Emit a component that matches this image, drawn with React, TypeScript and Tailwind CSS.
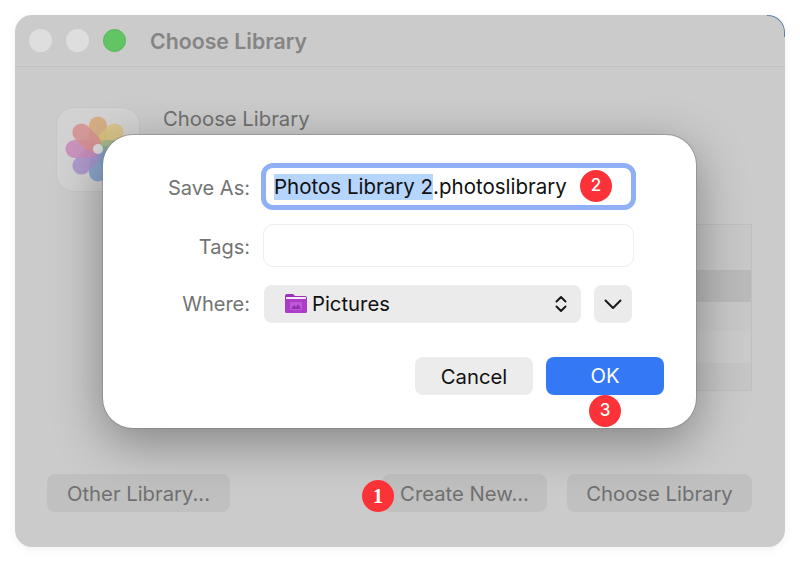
const petals = [
  { a: 0, c: "#d6a878" },
  { a: 45, c: "#d9c27e" },
  { a: 90, c: "#9cb98a" },
  { a: 135, c: "#84a9a4" },
  { a: 180, c: "#7f9ec9" },
  { a: 225, c: "#a891cc" },
  { a: 270, c: "#c98ab9" },
  { a: 315, c: "#d68f8f" },
];

function Badge({ n, className, serif }: { n: string; className: string; serif?: boolean }) {
  return (
    <div
      className={`absolute flex h-8 w-8 items-center justify-center rounded-full bg-[#fb3338] text-white ${
        serif ? "font-['Liberation_Serif',serif] text-[20px] font-bold" : "text-[17px] font-medium"
      } ${className}`}
    >
      {n}
    </div>
  );
}

function FooterButton({ label, className }: { label: string; className: string }) {
  return (
    <div className={`flex h-[38px] items-center justify-center rounded-lg bg-black/5 pt-[2px] text-[20.3px] text-[#707070] ${className}`}>
      {label}
    </div>
  );
}

function FieldLabel({ text, className }: { text: string; className: string }) {
  return <span className={`w-[147px] text-right text-[20px] text-[#737373] ${className}`}>{text}</span>;
}

export default function App() {
  return (
    <div className="relative h-[563px] w-[800px] overflow-hidden bg-white p-[15px] font-['Inter',sans-serif]">
      <div className="relative flex h-[532px] w-[770px] flex-col overflow-hidden rounded-[17px] bg-[#cbcbcb] shadow-[0_2px_10px_rgba(0,0,0,0.06)]">
        <div className="absolute right-0 top-0 h-[22px] w-[18px] rounded-tr-[17px] border-r border-t border-[#5f80ab]" />
        <div className="flex h-[52px] shrink-0 items-center border-b border-[#c0c0c0] pl-[14px]">
          <span className="h-[23px] w-[23px] rounded-full bg-[#dedede]" />
          <span className="ml-[14px] h-[23px] w-[23px] rounded-full bg-[#dedede]" />
          <span className="ml-[14px] h-[23px] w-[23px] rounded-full border border-[#52b955] bg-[#63c466]" />
          <span className="ml-[24px] pt-[2px] text-[21.3px] font-semibold text-[#858585]">Choose Library</span>
        </div>
        <div className="flex pl-[41px] pt-[40px]">
          <div className="flex h-[85px] w-[84px] items-center justify-center rounded-[18px] border border-[#c6c6c6] bg-[#d2d2d2]">
            <svg width="84" height="85" viewBox="-42 -42 84 85" className="shrink-0">
              {petals.map((p) => (
                <rect key={p.a} x="-9" y="-32.5" width="18" height="33" rx="9" fill={p.c} fillOpacity="0.85" transform={`rotate(${p.a})`} />
              ))}
              <circle r="5" fill="#dcdcdc" />
            </svg>
          </div>
          <div className="ml-[23px] text-[20.3px] leading-[24px] text-[#707070]">Choose Library</div>
        </div>
        <div className="ml-auto mr-[33px] mt-[32px] flex w-[130px] flex-col border border-[#bfbfbf]">
          <div className="h-[45px] bg-[#c8c8c8]" />
          <div className="h-[32px] bg-[#bababa]" />
          <div className="h-[29px] bg-[#c8c8c8]" />
          <div className="h-[32px] bg-[#cbcbcb]" />
          <div className="h-[27px] bg-[#c6c6c6]" />
        </div>
        <div className="mt-auto flex items-center pb-[35px] pl-[32px] pr-[33px]">
          <FooterButton label="Other Library..." className="w-[183px]" />
          <FooterButton label="Create New..." className="ml-auto w-[165px]" />
          <FooterButton label="Choose Library" className="ml-[20px] w-[185px]" />
        </div>
      </div>

      <div className="absolute left-[103px] top-[135px] flex h-[293px] w-[593px] flex-col rounded-[30px] bg-white shadow-[0_0_0_1px_rgba(130,130,130,0.55),0_14px_50px_rgba(0,0,0,0.36)]">
        <div className="mt-[28px] flex h-[47px] items-center">
          <FieldLabel text="Save As:" className="pt-[2px]" />
          <div className="ml-[11px] flex h-[47px] w-[375px] items-center rounded-[12px] border-[5px] border-[#8fb0f4] pl-[8px] pt-[1px] text-[20.5px] leading-[26px] text-[#111]">
            <span className="bg-[#b5d5fd]">Photos Library 2</span>
            <span>.photoslibrary</span>
          </div>
        </div>
        <div className="mt-[14px] flex h-[43px] items-center">
          <FieldLabel text="Tags:" className="pt-[2px]" />
          <div className="ml-[13px] h-[43px] w-[371px] rounded-[10px] border border-[#eeeeee]" />
        </div>
        <div className="mt-[18px] flex h-[38px] items-center">
          <FieldLabel text="Where:" className="" />
          <div className="ml-[14px] flex h-[38px] w-[317px] items-center rounded-lg bg-[#ebebeb] pl-[20px] pr-[14px] text-[20.3px] text-[#111]">
            <svg width="24" height="20" viewBox="0 0 24 20" className="shrink-0">
              <path d="M1 2 a2 2 0 0 1 2-2 h6 l2 2 h10 a2 2 0 0 1 2 2 v13 a2 2 0 0 1-2 2 H3 a2 2 0 0 1-2-2z" fill="#9a2fb8" />
              <rect x="2" y="3" width="20" height="2" fill="#f6ecf9" />
              <rect x="1" y="5" width="22" height="14" rx="2" fill="#ad3ccb" />
              <rect x="6" y="8" width="12" height="8" rx="1" fill="#bd5ad6" />
              <path d="M7 15 l3-4 2 2 2-3 3 5z" fill="#9230ad" />
            </svg>
            <span className="ml-[4px] pt-[1px]">Pictures</span>
            <svg width="12" height="18" viewBox="0 0 12 18" className="ml-auto" fill="none" stroke="#1a1a1a" strokeWidth="2" strokeLinecap="round" strokeLinejoin="round">
              <path d="M1.5 6.5 L6 2 L10.5 6.5" />
              <path d="M1.5 11.5 L6 16 L10.5 11.5" />
            </svg>
          </div>
          <div className="ml-[13px] flex h-[38px] w-[38px] items-center justify-center rounded-lg bg-[#ebebeb]">
            <svg width="18" height="11" viewBox="0 0 18 11" fill="none" stroke="#1a1a1a" strokeWidth="2" strokeLinecap="round" strokeLinejoin="round">
              <path d="M1.5 1.5 L9 9 L16.5 1.5" />
            </svg>
          </div>
        </div>
        <div className="mt-[34px] flex pl-[312px]">
          <div className="flex h-[38px] w-[118px] items-center justify-center rounded-lg bg-[#ececec] pt-[2px] text-[20.3px] text-[#111]">Cancel</div>
          <div className="ml-[13px] flex h-[38px] w-[118px] items-center justify-center rounded-lg bg-[#3478f6] pt-[1px] text-[20.3px] text-white">OK</div>
        </div>
      </div>

      <Badge n="1" serif className="left-[362px] top-[480px]" />
      <Badge n="2" className="left-[580px] top-[170px]" />
      <Badge n="3" className="left-[589px] top-[395px]" />
    </div>
  );
}
